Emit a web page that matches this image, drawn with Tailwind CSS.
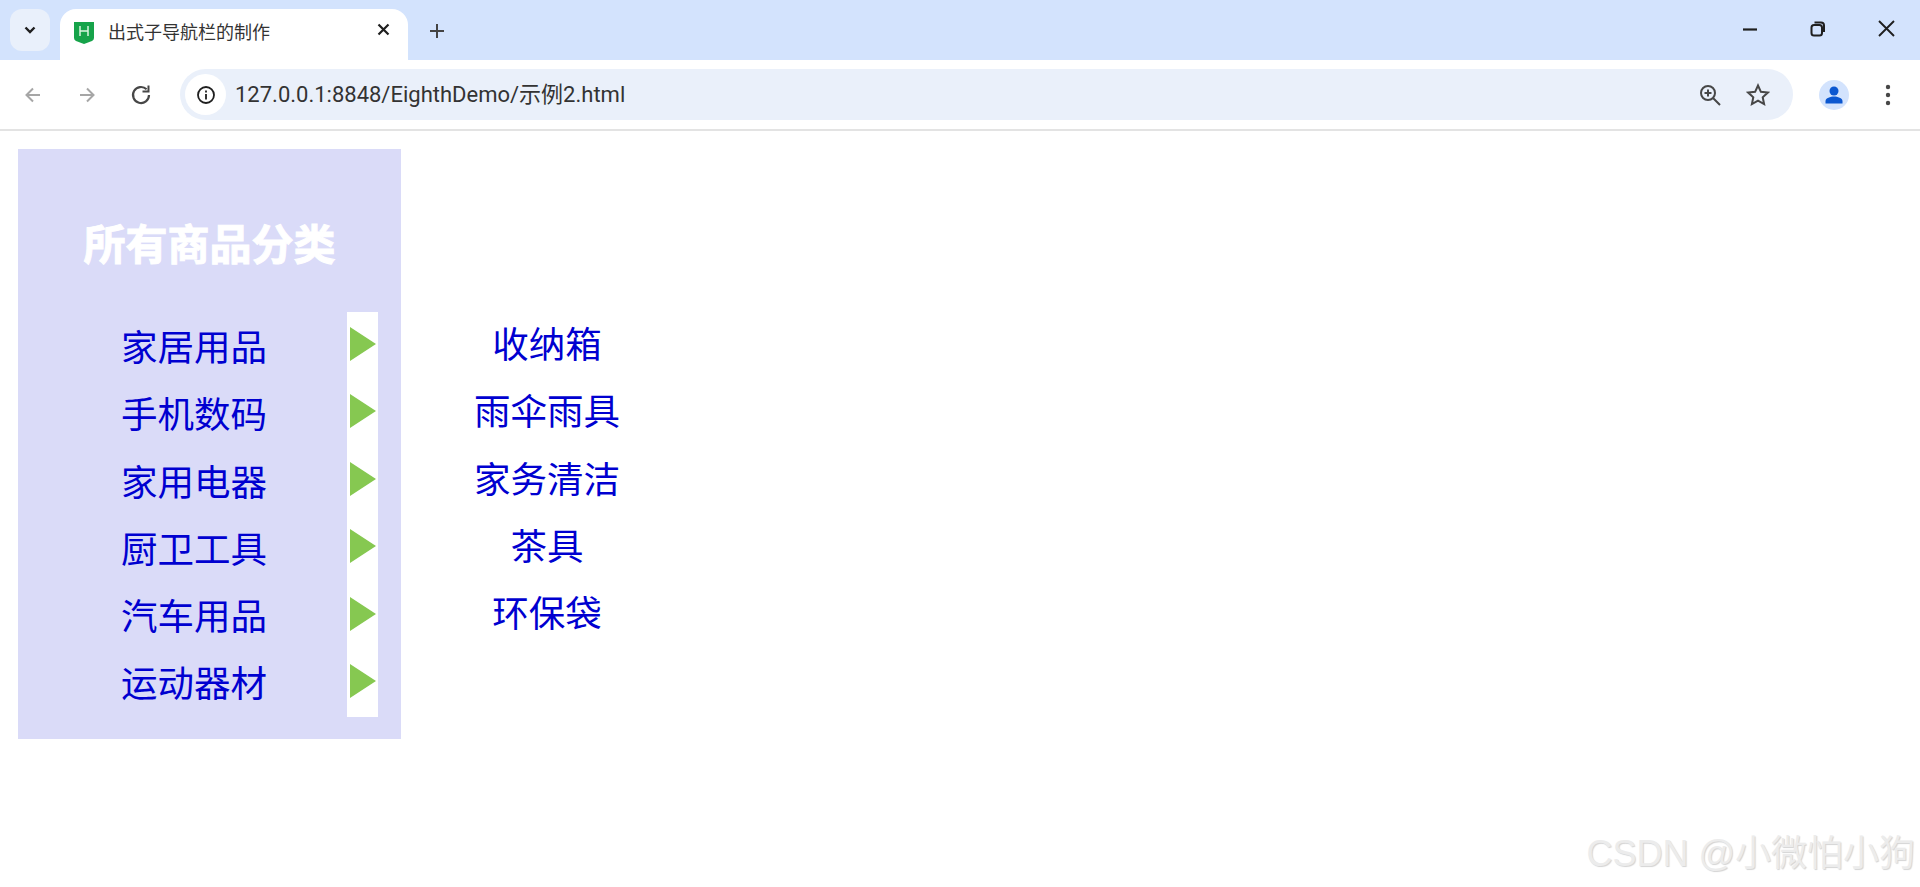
<!DOCTYPE html>
<html lang="zh-CN">
<head>
  <meta charset="UTF-8" />
  <title>出式子导航栏的制作</title>
  <script src="https://cdn.jsdelivr.net/npm/@tailwindcss/browser@4"></script>
</head>
<body class="relative h-[887px] w-[1920px] overflow-hidden bg-white font-['Roboto','Noto_Sans_CJK_SC',sans-serif]">

  <!-- tab strip -->
  <div class="flex h-[60px] items-end bg-[#d3e3fd]">
    <div class="mb-[9px] ml-[10px] flex h-[42px] w-[40px] items-center justify-center rounded-xl bg-[#e9f0fb]">
      <svg width="14" height="14" viewBox="0 0 14 14" fill="none" stroke="#1f1f1f" stroke-width="2.400"><path d="M2.500 4.500L7 9l4.500-4.500"/></svg>
    </div>
    <div class="relative ml-[10px] flex h-[51px] w-[348px] items-center rounded-t-2xl bg-white pb-[4px]">
      <svg class="ml-[14px]" width="20" height="24" viewBox="0 0 20 24"><path d="M0 1h20v16q0 2-2 3l-8 3-8-3q-2-1-2-3z" fill="#16a34a"/><path d="M6 5v10M14 5v10M6 10h8" stroke="#d9f5e0" stroke-width="1.500" fill="none"/></svg>
      <span class="ml-[14px] text-[18px] leading-none text-[#333]">出式子导航栏的制作</span>
      <svg class="absolute left-[317px] top-[14px]" width="13" height="13" viewBox="0 0 13 13" stroke="#1f1f1f" stroke-width="2.200"><path d="M1.500 1.500l10 10M11.500 1.500l-10 10"/></svg>
    </div>
    <svg class="mb-[21px] ml-[21px]" width="16" height="16" viewBox="0 0 16 16" stroke="#444" stroke-width="2"><path d="M8 1v14M1 8h14"/></svg>
    <div class="mb-[23px] ml-auto flex items-center">
      <svg width="16" height="16" viewBox="0 0 16 16" stroke="#1f1f1f" stroke-width="2.200"><path d="M1 8.500h14"/></svg>
      <svg class="ml-[52px]" width="16" height="16" viewBox="0 0 16 16" fill="none" stroke="#1f1f1f" stroke-width="2"><rect x="1.500" y="4" width="10.500" height="10.500" rx="2.500"/><path d="M4.500 1.500h6.500q3 0 3 3v6.500"/></svg>
      <svg class="ml-[52px] mr-[25px]" width="17" height="17" viewBox="0 0 17 17" stroke="#1f1f1f" stroke-width="1.900"><path d="M1 1l15 15M16 1L1 16"/></svg>
    </div>
  </div>

  <!-- toolbar -->
  <div class="flex h-[71px] items-center rounded-t-[10px] border-b-2 border-[#e3e3e3] bg-white">
    <svg class="ml-[23px]" width="20" height="20" viewBox="0 0 20 20" fill="none" stroke="#a6a6a6" stroke-width="2"><path d="M17 10H3.500M10 3.500L3.500 10l6.500 6.500"/></svg>
    <svg class="ml-[34px]" width="20" height="20" viewBox="0 0 20 20" fill="none" stroke="#a6a6a6" stroke-width="2"><path d="M3 10h13.500M10 3.500l6.500 6.500-6.500 6.500"/></svg>
    <svg class="ml-[32px]" width="24" height="24" viewBox="0 0 24 24" fill="none" stroke="#474747" stroke-width="2.200"><path d="M20 12a8 8 0 1 1-2.400-5.700"/><path d="M19.500 2.500v6h-6" stroke-width="2"/></svg>
    <div class="ml-[27px] flex h-[51px] w-[1613px] items-center rounded-full bg-[#eaf0fa]">
      <div class="ml-[5px] flex h-[41px] w-[41px] items-center justify-center rounded-full bg-white">
        <svg width="20" height="20" viewBox="0 0 20 20" fill="none" stroke="#1f1f1f" stroke-width="1.800"><circle cx="10" cy="10" r="8"/><path d="M10 9v5.500M10 5.500v2"/></svg>
      </div>
      <span class="ml-[9px] text-[22px] leading-none text-[#333]">127.0.0.1:8848/EighthDemo/示例2.html</span>
      <svg class="ml-auto" width="24" height="24" viewBox="0 0 24 24" fill="none" stroke="#474747" stroke-width="2"><circle cx="10" cy="10" r="7"/><path d="M15 15l7 7M10 6.500v7M6.500 10h7"/></svg>
      <svg class="ml-[24px] mr-[23px]" width="24" height="24" viewBox="0 0 24 24" fill="none" stroke="#474747" stroke-width="2"><path d="M12 2.500l2.900 6.300 6.900.8-5.100 4.700 1.400 6.800-6.100-3.400-6.100 3.400 1.400-6.800-5.100-4.700 6.900-.8z"/></svg>
    </div>
    <div class="ml-[26px] flex h-[30px] w-[30px] items-center justify-center rounded-full bg-[#d3e3fd]">
      <svg width="24" height="24" viewBox="0 0 24 24" fill="#0b57d0"><circle cx="12" cy="8" r="4.500"/><path d="M3.500 20.500v-2.500c0-3 5-4.500 8.500-4.500s8.500 1.500 8.500 4.500v2.500z"/></svg>
    </div>
    <svg class="ml-[36px]" width="6" height="22" viewBox="0 0 6 22" fill="#474747"><circle cx="3" cy="3" r="2.200"/><circle cx="3" cy="11" r="2.200"/><circle cx="3" cy="19" r="2.200"/></svg>
  </div>

  <!-- page -->
  <div class="flex items-start pl-[18px] pt-[18px] font-['Liberation_Sans','Noto_Sans_CJK_SC',sans-serif]">
    <div class="h-[590px] w-[383px] bg-[#dadbf8]">
      <h1 class="mt-[69px] text-center text-[42px] font-bold leading-[56px] text-white [-webkit-text-stroke:1px_white]">所有商品分类</h1>
      <div class="mt-[38px] flex">
        <ul class="ml-[103px] w-[226px] pt-[3px] text-[36.500px] leading-[67.300px] text-[#0000d0]">
          <li>家居用品</li>
          <li>手机数码</li>
          <li>家用电器</li>
          <li>厨卫工具</li>
          <li>汽车用品</li>
          <li>运动器材</li>
        </ul>
        <div class="flex h-[405px] w-[31px] flex-col items-start gap-[33.400px] bg-white pl-[3px] pt-[15px]">
          <svg class="shrink-0" width="26" height="34" viewBox="0 0 26 34"><path d="M0 0l26 17L0 34z" fill="#86c851"/></svg>
          <svg class="shrink-0" width="26" height="34" viewBox="0 0 26 34"><path d="M0 0l26 17L0 34z" fill="#86c851"/></svg>
          <svg class="shrink-0" width="26" height="34" viewBox="0 0 26 34"><path d="M0 0l26 17L0 34z" fill="#86c851"/></svg>
          <svg class="shrink-0" width="26" height="34" viewBox="0 0 26 34"><path d="M0 0l26 17L0 34z" fill="#86c851"/></svg>
          <svg class="shrink-0" width="26" height="34" viewBox="0 0 26 34"><path d="M0 0l26 17L0 34z" fill="#86c851"/></svg>
          <svg class="shrink-0" width="26" height="34" viewBox="0 0 26 34"><path d="M0 0l26 17L0 34z" fill="#86c851"/></svg>
        </div>
      </div>
    </div>
    <ul class="ml-[46px] mt-[163px] w-[200px] text-center text-[36.500px] leading-[67.300px] text-[#0000d0]">
      <li>收纳箱</li>
      <li>雨伞雨具</li>
      <li>家务清洁</li>
      <li>茶具</li>
      <li>环保袋</li>
    </ul>
  </div>

  <!-- watermark -->
  <div class="absolute right-[5px] top-[830px] font-['Liberation_Sans','Noto_Sans_CJK_SC',sans-serif] text-[36px] leading-[48px] text-[#ececec] [text-shadow:1px_1px_1px_#d4d4d4]">CSDN @小微怕小狗</div>
</body>
</html>
